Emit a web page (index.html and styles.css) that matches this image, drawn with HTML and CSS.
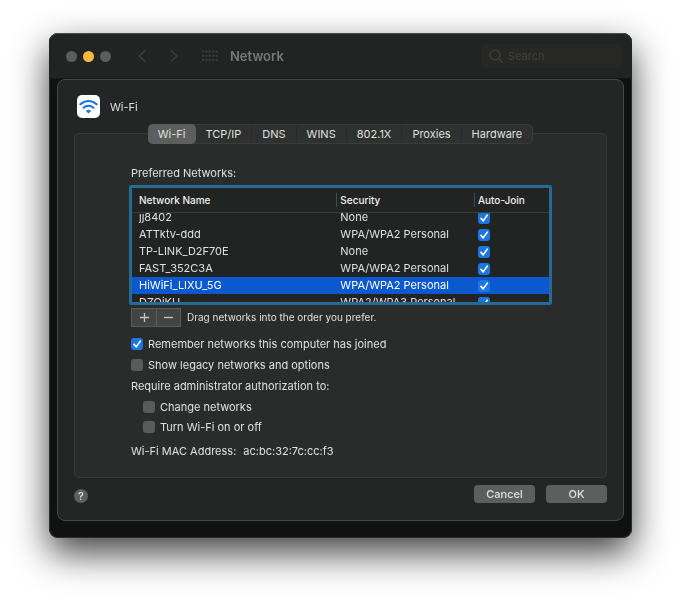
FILE: index.html
```html
<!DOCTYPE html>
<html lang="en">
<head>
    <meta charset="UTF-8">
    <meta name="viewport" content="width=device-width, initial-scale=1.0">
    <title>Network</title>
    <link rel="stylesheet" href="styles.css">
</head>
<body>
    <div class="window">
        <header class="titlebar">
            <div class="lights">
                <span class="light"></span>
                <span class="light light-yellow"></span>
                <span class="light"></span>
            </div>
            <div class="nav">
                <button class="nav-btn" aria-label="Back">
                    <svg width="8" height="14" viewBox="0 0 8 14"><path d="M7 1.5L1.2 7L7 12.5"/></svg>
                </button>
                <button class="nav-btn" aria-label="Forward">
                    <svg width="8" height="14" viewBox="0 0 8 14"><path d="M1 1.5L6.8 7L1 12.5"/></svg>
                </button>
            </div>
            <button class="nav-btn grid-btn" aria-label="Show All">
                <svg width="16" height="12" viewBox="0 0 16 12">
                    <path class="dots" d="M0 1.5H16M0 5.8H16M0 10.1H16"/>
                </svg>
            </button>
            <h1>Network</h1>
            <label class="search">
                <svg width="15" height="15" viewBox="0 0 15 15"><circle cx="6" cy="6" r="4.9"/><path d="M9.6 9.6L14 14"/></svg>
                <input type="search" placeholder="Search" aria-label="Search">
            </label>
        </header>

        <main class="sheet">
            <div class="service">
                <svg class="wifi-icon" width="23" height="23" viewBox="0 0 23 23">
                    <rect width="23" height="23" rx="5" fill="#fff"/>
                    <path d="M3.4 9.3A11.6 11.6 0 0 1 19.6 9.3" fill="none" stroke="#1f74e0" stroke-width="2.1" stroke-linecap="round"/>
                    <path d="M6.6 12.7A7 7 0 0 1 16.4 12.7" fill="none" stroke="#1f74e0" stroke-width="2.1" stroke-linecap="round"/>
                    <path d="M11.5 18.4L8.9 15.9A3.8 3.8 0 0 1 14.1 15.9Z" fill="#1f74e0"/>
                </svg>
                <h2>Wi-Fi</h2>
            </div>

            <nav class="tabs">
                <button class="tab active">Wi-Fi</button>
                <button class="tab">TCP/IP</button>
                <button class="tab">DNS</button>
                <button class="tab">WINS</button>
                <button class="tab">802.1X</button>
                <button class="tab">Proxies</button>
                <button class="tab">Hardware</button>
            </nav>

            <section class="panel">
                <p class="line" id="preferred">Preferred Networks:</p>

                <div class="list">
                    <table aria-labelledby="preferred">
                        <thead>
                            <tr>
                                <th class="col-name">Network Name</th>
                                <th class="col-security">Security</th>
                                <th class="col-join">Auto-Join</th>
                            </tr>
                        </thead>
                        <tbody>
                            <tr>
                                <td>jj8402</td>
                                <td>None</td>
                                <td><input type="checkbox" aria-label="Auto-Join jj8402" checked></td>
                            </tr>
                            <tr>
                                <td>ATTktv-ddd</td>
                                <td>WPA/WPA2 Personal</td>
                                <td><input type="checkbox" aria-label="Auto-Join ATTktv-ddd" checked></td>
                            </tr>
                            <tr>
                                <td>TP-LINK_D2F70E</td>
                                <td>None</td>
                                <td><input type="checkbox" aria-label="Auto-Join TP-LINK_D2F70E" checked></td>
                            </tr>
                            <tr>
                                <td>FAST_352C3A</td>
                                <td>WPA/WPA2 Personal</td>
                                <td><input type="checkbox" aria-label="Auto-Join FAST_352C3A" checked></td>
                            </tr>
                            <tr class="selected">
                                <td>HiWiFi_LIXU_5G</td>
                                <td>WPA/WPA2 Personal</td>
                                <td><input type="checkbox" aria-label="Auto-Join HiWiFi_LIXU_5G" checked></td>
                            </tr>
                            <tr>
                                <td>DZOiKU</td>
                                <td>WPA2/WPA3 Personal</td>
                                <td><input type="checkbox" aria-label="Auto-Join DZOiKU" checked></td>
                            </tr>
                        </tbody>
                    </table>
                </div>

                <div class="list-tools">
                    <div class="add-remove">
                        <button aria-label="Add"><svg width="11" height="11" viewBox="0 0 11 11"><path d="M5.5 1V10M1 5.5H10"/></svg></button>
                        <button aria-label="Remove"><svg width="11" height="11" viewBox="0 0 11 11"><path d="M1 5.5H10"/></svg></button>
                    </div>
                    <span class="hint">Drag networks into the order you prefer.</span>
                </div>

                <label class="line option"><input type="checkbox" checked> Remember networks this computer has joined</label>
                <label class="line option"><input type="checkbox"> Show legacy networks and options</label>
                <p class="line">Require administrator authorization to:</p>
                <div class="sub-options">
                    <label class="line option"><input type="checkbox"> Change networks</label>
                    <label class="line option"><input type="checkbox"> Turn Wi-Fi on or off</label>
                </div>
                <p class="line mac"><span>Wi-Fi MAC Address:</span><span>ac:bc:32:7c:cc:f3</span></p>
            </section>

            <footer class="actions">
                <button class="help" aria-label="Help">?</button>
                <button class="btn">Cancel</button>
                <button class="btn">OK</button>
            </footer>
        </main>
    </div>

    <script>
        // list opens slightly scrolled
        document.querySelector('.list').scrollTop = 4;
    </script>
</body>
</html>
```
FILE: styles.css
```css
* {
    box-sizing: border-box;
}
body {
    margin: 0;
    padding: 33px 48px 64px 49px;
    background-color: #fff;
    color: #dfe0df;
    font-family: Inter, "Liberation Sans", sans-serif;
    font-size: 11px;
    line-height: 20px;
}
h1, h2, p {
    margin: 0;
    font-size: 11px;
    font-weight: 400;
}
button, input {
    margin: 0;
    padding: 0;
    border: 0;
    color: inherit;
    font: inherit;
}
.window {
    padding: 0 8px 17px;
    background-color: #101211;
    border-radius: 9px;
    box-shadow: 0 15px 36px rgba(0,0,0,0.75), inset 0 1px 0 #4b4d4c, inset 0 0 0 1px #2c2e2d;
    overflow: hidden;
}

/* title bar */
.titlebar {
    display: flex;
    align-items: center;
    height: 46px;
    margin: 0 -8px;
    padding: 0 10px 0 17px;
    background-color: #222423;
    border-top: 1px solid #4b4d4c;
    border-bottom: 1px solid #171918;
    border-radius: 9px 9px 0 0;
}
.lights {
    display: flex;
    gap: 6px;
}
.light {
    width: 11px;
    height: 11px;
    border-radius: 50%;
    background-color: #5c5e5d;
}
.light-yellow {
    background-color: #fdb93e;
}
.nav {
    display: flex;
    gap: 24px;
    margin-left: 27px;
}
.nav-btn {
    display: flex;
    background: none;
}
.nav-btn svg, .search svg {
    flex: none;
    fill: none;
    stroke: #3d3f3e;
    stroke-width: 1.4;
}
.grid-btn {
    margin-left: 24px;
}
.nav-btn .dots {
    stroke-width: 2;
    stroke-dasharray: 2 1.4;
}
.titlebar h1 {
    margin-left: 12px;
    color: #777978;
    font-size: 13px;
    font-weight: 600;
}
.search {
    display: flex;
    align-items: center;
    gap: 4px;
    width: 141px;
    height: 24px;
    margin-left: auto;
    padding: 0 8px;
    background-color: #272726;
    border-radius: 5px;
}
.search input {
    width: 100%;
    min-width: 0;
    background: none;
}
.search input::placeholder {
    color: #3f4140;
}

/* sheet */
.sheet {
    padding: 15px 16px 17px;
    background-color: #242625;
    border: 1px solid #484a49;
    border-radius: 8px;
}
.service {
    display: flex;
    align-items: center;
    gap: 10px;
    padding-left: 3px;
}
.tabs {
    display: flex;
    position: relative;
    width: max-content;
    height: 20px;
    margin: 6px auto 0;
    background-color: #2f3130;
    border: 1px solid #3b3d3c;
    border-radius: 5px;
}
.tab {
    padding: 0 10px;
    background: none;
    border-right: 1px solid #292b2a;
    line-height: 18px;
}
.tab:last-child {
    border-right: 0;
}
.tab.active {
    margin: -1px 0 -1px -1px;
    background-color: #5d5f5e;
    border-right: 0;
    border-radius: 5px;
}
.panel {
    margin-top: -11px;
    padding: 29px 54px 16px 56px;
    background-color: #2a2c2b;
    border: 1px solid #373938;
    border-radius: 5px;
}
.line {
    min-height: 20px;
}

/* network list */
.list {
    height: 120px;
    margin: 2px 0 0 -2px;
    background-color: #222423;
    border: 3px solid #266b96;
    border-radius: 2px;
    overflow: auto;
    scrollbar-width: none;
}
table {
    width: 100%;
    table-layout: fixed;
    border-collapse: separate;
    border-spacing: 0;
}
th, td {
    padding: 0;
    text-align: left;
    white-space: nowrap;
}
th {
    position: sticky;
    top: 0;
    z-index: 1;
    height: 25px;
    background: linear-gradient(#484a49, #484a49) left center / 1px 14px no-repeat #222423;
    border-bottom: 1px solid #3a3c3b;
    color: #f0f1f0;
    font-size: 10px;
    font-weight: 500;
}
td {
    height: 17px;
    line-height: 17px;
}
th:first-child {
    background-image: none;
}
th:first-child, td:first-child {
    padding-left: 7px;
}
th + th, td + td {
    padding-left: 4px;
}
.col-name {
    width: 49%;
}
.col-security {
    width: 33%;
}
.selected td {
    background-color: #0c59cf;
    color: #fff;
}
.list-tools {
    display: flex;
    align-items: center;
    gap: 6px;
    margin-top: 2px;
}
.add-remove {
    display: flex;
    height: 19px;
    border: 1px solid #5a5c5b;
}
.add-remove button {
    display: flex;
    align-items: center;
    justify-content: center;
    width: 23px;
    background-color: #434544;
}
.add-remove button:first-child {
    width: 25px;
    border-right: 1px solid #5a5c5b;
}
.add-remove svg {
    stroke: #c4c5c4;
    stroke-width: 1.3;
}
.hint {
    font-size: 10px;
}

/* options */
input[type="checkbox"] {
    appearance: none;
    flex: none;
    width: 12px;
    height: 12px;
    background-color: #5a5c5b;
    border-radius: 3px;
}
input[type="checkbox"]:checked {
    background: url("data:image/svg+xml,%3Csvg xmlns='http://www.w3.org/2000/svg' viewBox='0 0 12 12'%3E%3Cpath d='M3 6.4L5.2 8.9L9.2 3.2' fill='none' stroke='white' stroke-width='1.6' stroke-linecap='round' stroke-linejoin='round'/%3E%3C/svg%3E") #1c76e2;
}
td input[type="checkbox"] {
    display: block;
}
.option {
    display: flex;
    align-items: center;
    gap: 5px;
}
.list-tools + .option {
    margin-top: 7px;
}
.option + .line {
    margin-top: 1px;
}
.sub-options {
    padding: 1px 0 0 12px;
}
.sub-options .option + .option {
    margin-top: 0;
}
.mac {
    display: flex;
    gap: 7px;
    margin-top: 4px;
}

/* buttons */
.actions {
    display: flex;
    gap: 11px;
    margin-top: 7px;
}
.btn {
    width: 61px;
    height: 18px;
    background-color: #5d5f5e;
    border-radius: 4px;
    font-weight: 500;
    line-height: 18px;
}
.help {
    align-self: flex-end;
    width: 14px;
    height: 14px;
    margin-right: auto;
    background-color: #5d5f5e;
    border-radius: 50%;
    font-weight: 500;
    line-height: 14px;
}
```
